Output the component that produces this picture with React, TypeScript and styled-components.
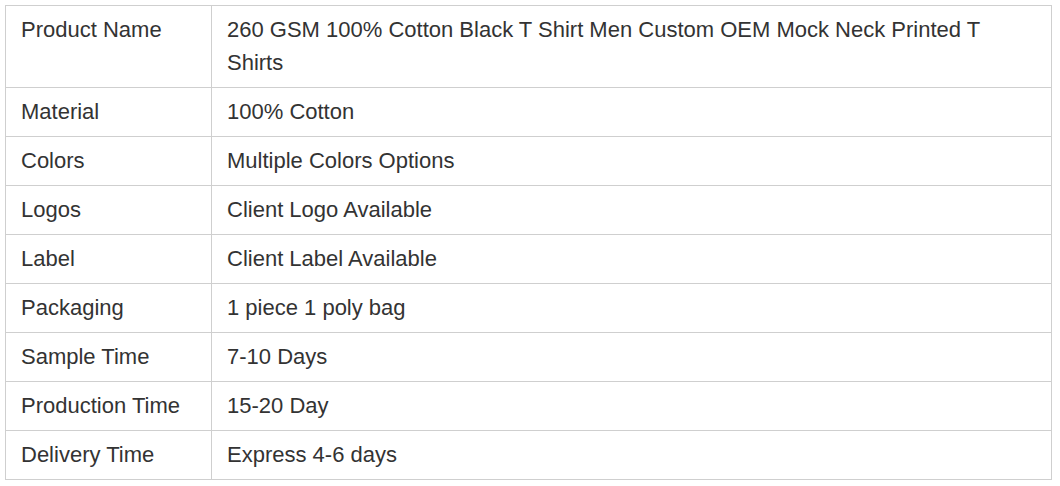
import React from "react";
import styled, { createGlobalStyle } from "styled-components";

const Global = createGlobalStyle`
  html, body { margin: 0; padding: 0; background: #ffffff; }
  body { font-family: "Liberation Sans", Arial, sans-serif; }
`;

const Page = styled.div`
  padding: 5px 9px 0 5px;
`;

const Table = styled.table`
  width: 1047px;
  border-collapse: collapse;
  table-layout: fixed;
  color: #333333;
  font-size: 22px;
  line-height: 33px;
`;

const Cell = styled.td<{ $label?: boolean }>`
  border: 1px solid #cfcfcf;
  padding: 7px 15px 8px 15px;
  vertical-align: top;
  width: ${(p) => (p.$label ? "175px" : "auto")};
`;

const rows: [string, string][] = [
  ["Product Name", "260 GSM 100% Cotton Black T Shirt Men Custom OEM Mock Neck Printed T Shirts"],
  ["Material", "100% Cotton"],
  ["Colors", "Multiple Colors Options"],
  ["Logos", "Client Logo Available"],
  ["Label", "Client Label Available"],
  ["Packaging", "1 piece 1 poly bag"],
  ["Sample Time", "7-10 Days"],
  ["Production Time", "15-20 Day"],
  ["Delivery Time", "Express 4-6 days"],
];

export default function App() {
  return (
    <>
      <Global />
      <Page>
        <Table>
          <tbody>
            {rows.map(([k, v]) => (
              <tr key={k}>
                <Cell $label>{k}</Cell>
                <Cell>{v}</Cell>
              </tr>
            ))}
          </tbody>
        </Table>
      </Page>
    </>
  );
}
